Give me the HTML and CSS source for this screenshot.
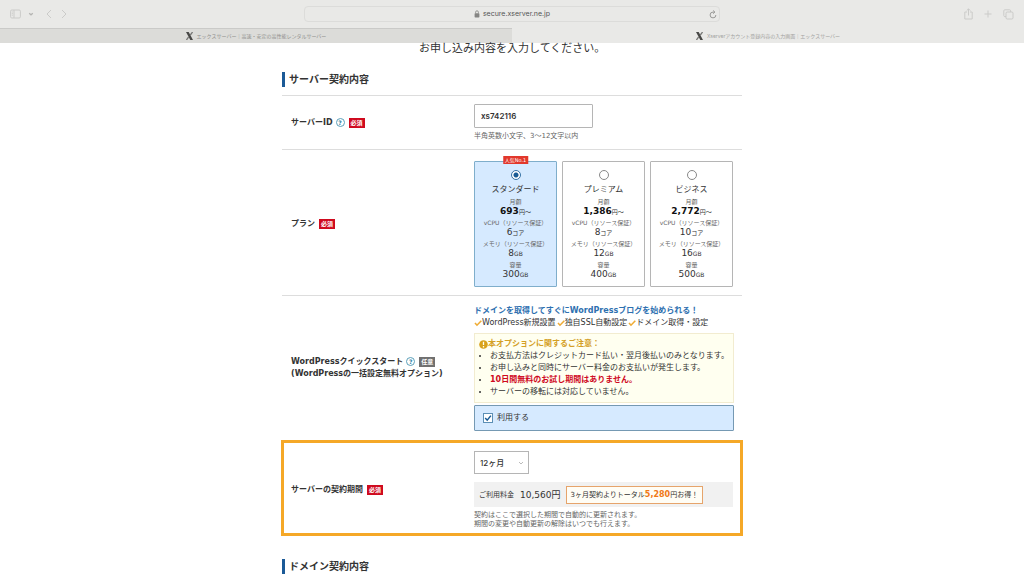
FILE: index.html
```html
<!DOCTYPE html>
<html lang="ja">
<head>
<meta charset="utf-8">
<meta name="viewport" content="width=device-width, initial-scale=1">
<title>Xserverアカウント登録内容の入力画面｜エックスサーバー</title>
<link rel="stylesheet" href="styles.css">
</head>
<body>
<header class="browser">
  <div class="toolbar">
    <div class="tools">
      <button class="tool" type="button" aria-label="サイドバー"><svg width="11" height="10" viewBox="0 0 11 10"><rect x=".6" y="1" width="9.8" height="8" rx="1.2"/><path d="M4 1v8M1.8 3h1M1.8 4.6h1M1.8 6.2h1"/></svg></button>
      <button class="tool tool-caret" type="button" aria-label="タブグループ"><svg width="6" height="10" viewBox="0 0 6 10"><path d="M1.2 4.2 3 5.8l1.8-1.6" stroke-width="1.3"/></svg></button>
      <button class="tool" type="button" aria-label="戻る"><svg width="8" height="10" viewBox="0 0 8 10"><path d="M6 1 2 5l4 4"/></svg></button>
      <button class="tool" type="button" aria-label="進む"><svg width="8" height="10" viewBox="0 0 8 10"><path d="m2 1 4 4-4 4"/></svg></button>
    </div>
    <div class="address">
      <span class="address-url"><svg width="6" height="8" viewBox="0 0 6 8"><rect x=".6" y="3.2" width="4.8" height="4.2" rx=".7" fill="#858583"/><path d="M1.6 3.4V2.2a1.4 1.4 0 0 1 2.8 0v1.2" fill="none" stroke="#858583" stroke-width=".8"/></svg>secure.xserver.ne.jp</span>
      <button class="tool reload" type="button" aria-label="再読み込み"><svg width="8" height="9" viewBox="0 0 8 9"><path d="M5.6 2.1H4A2.9 2.9 0 1 0 6.9 5M4.2.5l1.7 1.6-1.7 1.6"/></svg></button>
    </div>
    <div class="tools tools-end">
      <button class="tool" type="button" aria-label="共有"><svg width="9" height="12" viewBox="0 0 9 12"><path d="M3 4H.8v7h7.4V4H6M4.5 7.5V1M2.7 2.6 4.5.8l1.8 1.8"/></svg></button>
      <button class="tool" type="button" aria-label="新規タブ"><svg width="8" height="10" viewBox="0 0 8 10"><path d="M4 1.5v7M.5 5h7"/></svg></button>
      <button class="tool" type="button" aria-label="タブ一覧"><svg width="11" height="11" viewBox="0 0 11 11"><rect x="3" y="3" width="7" height="7" rx="1.2"/><path d="M3 7.6H1.8A1 1 0 0 1 .8 6.600V1.800A1 1 0 0 1 1.800.8h4.800a1 1 0 0 1 1 1V3"/></svg></button>
    </div>
  </div>
  <nav class="tabs">
    <a class="tab" href="#"><svg class="tab-icon" width="7" height="8" viewBox="0 0 7 8"><path d="M0 0h2.700l4.300 8H4.300z" fill="#484846"/><path d="M6.600 0 4.300 3M.4 8l2.200-3" stroke="#767674" stroke-width="1.300" fill="none"/></svg>エックスサーバー｜高速・安定の高性能レンタルサーバー</a>
    <a class="tab tab-current" href="#"><svg class="tab-icon" width="7" height="8" viewBox="0 0 7 8"><path d="M0 0h2.700l4.300 8H4.300z" fill="#484846"/><path d="M6.600 0 4.300 3M.4 8l2.200-3" stroke="#767674" stroke-width="1.300" fill="none"/></svg>Xserverアカウント登録内容の入力画面｜エックスサーバー</a>
  </nav>
</header>

<main class="page">
  <p class="lead">お申し込み内容を入力してください。</p>

  <h2 class="section-title">サーバー契約内容</h2>

  <div class="row">
    <div class="row-label"><label for="server-id">サーバーID</label><button class="help" type="button" aria-label="サーバーIDのヘルプ">?</button><span class="tag">必須</span></div>
    <div class="row-body">
      <input class="text-field" id="server-id" type="text" value="xs742116">
      <p class="note">半角英数小文字、3～12文字以内</p>
    </div>
  </div>

  <div class="row row-plan">
    <div class="row-label" id="plan-label">プラン<span class="tag">必須</span></div>
    <div class="plans" role="radiogroup" aria-labelledby="plan-label">
      <label class="plan plan-selected">
        <span class="ribbon">人気No.1</span>
        <input class="radio" type="radio" name="plan" checked>
        <span class="plan-name">スタンダード</span>
        <span class="spec">月額</span><span class="value"><b>693</b><small>円～</small></span>
        <span class="spec">vCPU（リソース保証）</span><span class="value">6<small>コア</small></span>
        <span class="spec">メモリ（リソース保証）</span><span class="value">8<small>GB</small></span>
        <span class="spec">容量</span><span class="value">300<small>GB</small></span>
      </label>
      <label class="plan">
        <input class="radio" type="radio" name="plan">
        <span class="plan-name">プレミアム</span>
        <span class="spec">月額</span><span class="value"><b>1,386</b><small>円～</small></span>
        <span class="spec">vCPU（リソース保証）</span><span class="value">8<small>コア</small></span>
        <span class="spec">メモリ（リソース保証）</span><span class="value">12<small>GB</small></span>
        <span class="spec">容量</span><span class="value">400<small>GB</small></span>
      </label>
      <label class="plan">
        <input class="radio" type="radio" name="plan">
        <span class="plan-name">ビジネス</span>
        <span class="spec">月額</span><span class="value"><b>2,772</b><small>円～</small></span>
        <span class="spec">vCPU（リソース保証）</span><span class="value">10<small>コア</small></span>
        <span class="spec">メモリ（リソース保証）</span><span class="value">16<small>GB</small></span>
        <span class="spec">容量</span><span class="value">500<small>GB</small></span>
      </label>
    </div>
  </div>

  <div class="row row-quick">
    <div class="row-label"><span>WordPressクイックスタート</span><button class="help" type="button" aria-label="クイックスタートのヘルプ">?</button><span class="tag tag-optional">任意</span><span class="label-sub">(WordPressの一括設定無料オプション)</span></div>
    <div class="row-body">
      <p class="promo">ドメインを取得してすぐにWordPressブログを始められる！</p>
      <ul class="features">
        <li><svg width="8" height="8" viewBox="0 0 8 8"><path d="m1 4 2 2.200L7.300 1.800"/></svg>WordPress新規設置</li>
        <li><svg width="8" height="8" viewBox="0 0 8 8"><path d="m1 4 2 2.200L7.300 1.800"/></svg>独自SSL自動設定</li>
        <li><svg width="8" height="8" viewBox="0 0 8 8"><path d="m1 4 2 2.200L7.300 1.800"/></svg>ドメイン取得・設定</li>
      </ul>
      <div class="notice">
        <p class="notice-title"><svg width="9" height="9" viewBox="0 0 9 9"><circle cx="4.500" cy="4.500" r="4.300" fill="#d9a21b"/><path d="M4.500 1.700v3.400M4.500 6.100v1.300" stroke="#fffff0" stroke-width="1.300"/></svg>本オプションに関するご注意：</p>
        <ul class="notice-list">
          <li>お支払方法はクレジットカード払い・翌月後払いのみとなります。</li>
          <li>お申し込みと同時にサーバー料金のお支払いが発生します。</li>
          <li><strong>10日間無料のお試し期間はありません。</strong></li>
          <li>サーバーの移転には対応していません。</li>
        </ul>
      </div>
      <label class="use"><input class="check" type="checkbox" checked>利用する</label>
    </div>
  </div>

  <div class="row row-highlight">
    <div class="row-label"><label for="term">サーバーの契約期間</label><span class="tag">必須</span></div>
    <div class="row-body">
      <select class="term" id="term"><option>12ヶ月</option></select>
      <div class="fee"><span>ご利用料金</span><span class="fee-price">10,560円</span><span class="saving">3ヶ月契約よりトータル<b>5,280</b>円お得！</span></div>
      <p class="note">契約はここで選択した期間で自動的に更新されます。<br>期間の変更や自動更新の解除はいつでも行えます。</p>
    </div>
  </div>

  <h2 class="section-title section-next">ドメイン契約内容</h2>
</main>
</body>
</html>
```

FILE: styles.css
```css
* { box-sizing: border-box; }

body {
  margin: 0;
  background: #fff;
  color: #333;
  font: 8px/12px "DejaVu Sans", "Noto Sans CJK JP", sans-serif;
}

p, ul, h2 { margin: 0; padding: 0; }
button, input, select { margin: 0; font: inherit; color: inherit; }

/* Browser window */
.browser { background: #e9e9e7; font-family: Inter, "Noto Sans CJK JP", sans-serif; }

.toolbar {
  display: grid;
  grid-template-columns: 1fr minmax(0, 416px) 1fr;
  align-items: center;
  height: 28px;
  padding: 0 10px;
}

.tools { display: flex; align-items: center; gap: 7px; }
.tools-end { justify-content: flex-end; gap: 11px; }
.tools-end svg { display: block; }

.tool {
  display: flex;
  padding: 0;
  border: 0;
  background: none;
}
.tool svg { fill: none; stroke: #cbcbc9; stroke-width: 1; }
.tool-caret { margin-right: 4px; }
.tool-caret svg { stroke: #b5b5b3; }

.address {
  display: grid;
  grid-template-columns: 1fr auto 1fr;
  align-items: center;
  height: 16px;
  padding: 0 2px;
  border: 1px solid #dcdcda;
  border-radius: 4px;
}
.address-url {
  display: flex;
  grid-column: 2;
  align-items: center;
  gap: 3px;
  color: #555;
  font-size: 7px;
}
.reload { justify-self: end; }
.reload svg { stroke: #999997; }

.tabs { display: grid; grid-template-columns: 1fr 1fr; }
.tab {
  display: flex;
  align-items: center;
  justify-content: center;
  gap: 4px;
  height: 15px;
  border-top: 1px solid #cacac8;
  background: #dcdcd9;
  color: #8e8e8c;
  font-size: 5px;
  text-decoration: none;
  white-space: nowrap;
}
.tab-current { border-color: #e9e9e7; background: #e9e9e7; color: #a2a2a0; }

/* Form */
.page { max-width: 460px; margin: 0 auto; }

.lead {
  padding-left: 137px;
  font-size: 11px;
  line-height: 11px;
}

.section-title {
  margin: 18px 0 8px;
  padding-left: 4px;
  border-left: 3px solid #1b5a97;
  font-size: 10px;
  line-height: 15px;
}
.section-next { margin: 23px 0 0; }

.row {
  display: grid;
  grid-template-columns: 183px 1fr;
  align-items: center;
  padding: 8px 9px;
  border-top: 1px solid #ddd;
}
.row-label {
  display: flex;
  flex-wrap: wrap;
  align-items: center;
  font-weight: bold;
}
.label-sub { width: 100%; }

.help {
  width: 9px;
  height: 9px;
  margin-left: 3px;
  padding: 0;
  border: 1px solid #5b9fba;
  border-radius: 50%;
  background: #fff;
  color: #2b7fa3;
  font-size: 6px;
  font-weight: bold;
  line-height: 7px;
}
.tag {
  margin-left: 4px;
  padding: 0 2px;
  background: #cf0a1e;
  color: #fff;
  font-size: 6px;
  line-height: 10px;
}
.tag-optional { background: #707070; }

.text-field {
  display: block;
  width: 119px;
  height: 24px;
  padding: 0 6px;
  border: 1px solid #b5b5b5;
  border-radius: 1px;
  background: #fff;
  font-family: Inter, sans-serif;
  font-weight: 600;
}
.note {
  padding-top: 4px;
  color: #666;
  font-size: 7px;
  line-height: 9px;
}

/* Plan cards */
.row-plan { padding: 11px 9px 8px; }
.plans { display: grid; grid-template-columns: repeat(3, 1fr); gap: 5px; }
.plan {
  position: relative;
  display: flex;
  flex-direction: column;
  align-items: center;
  padding: 8px 0 5px;
  border: 1px solid #b5b5b5;
  border-radius: 1px;
  white-space: nowrap;
}
.plan-selected { border-color: #7faecb; background: #d6eaff; }
.ribbon {
  position: absolute;
  top: -6px;
  left: 50%;
  padding: 0 2px;
  transform: translateX(-50%);
  background: #e2382c;
  color: #fff;
  font-size: 5px;
  line-height: 8px;
}
.radio {
  width: 10px;
  height: 10px;
  appearance: none;
  border: 1px solid #888;
  border-radius: 50%;
  background: #fff;
}
.radio:checked {
  border-color: #3572a5;
  background: radial-gradient(circle, #185a94 0 2px, #fff 3px);
}
.plan-name { margin: 4px 0 1px; }
.spec { color: #666; font-size: 6px; line-height: 9px; }
.value { margin-bottom: 1px; font-size: 9px; line-height: 10px; }
.value small { font-size: 6px; }
.value b { color: #111; }

/* Quick start */
.row-quick { padding-bottom: 9px; }
.promo { padding-top: 1px; color: #2e70b0; font-weight: bold; }
.features { display: flex; gap: 1px; list-style: none; white-space: nowrap; }
.features li { display: flex; align-items: center; }
.features svg { fill: none; stroke: #efac35; stroke-width: 1.6; }
.notice {
  margin: 4px 0 2px;
  padding: 4px;
  border: 1px solid #f2ecd0;
  background: #fffff0;
}
.notice-title {
  display: flex;
  align-items: center;
  color: #d4a026;
  font-weight: bold;
}
.notice-list { padding-left: 11px; white-space: nowrap; }
.notice-list strong { color: #cf0a1e; }
.use {
  display: flex;
  align-items: center;
  gap: 4px;
  height: 26px;
  padding: 0 8px;
  border: 1px solid #7599b3;
  border-radius: 1px;
  background: #d6eaff;
}
.check {
  width: 10px;
  height: 10px;
  appearance: none;
  border: 1px solid #5c8fb5;
  background: #fff url("data:image/svg+xml,%3Csvg xmlns='http://www.w3.org/2000/svg' viewBox='0 0 8 8'%3E%3Cpath d='m1.200 4 2 2.200L6.900 1.600' fill='none' stroke='%23185a94' stroke-width='1.500'/%3E%3C/svg%3E") center / 8px no-repeat;
}

/* Contract term */
.row-highlight {
  margin: 0 -1px;
  padding: 8px 7px 4px;
  border: 3px solid #f5a828;
}
.term {
  display: block;
  width: 55px;
  height: 23px;
  padding: 0 5px;
  appearance: none;
  border: 1px solid #b5b5b5;
  border-radius: 0;
  background: #fff url("data:image/svg+xml,%3Csvg xmlns='http://www.w3.org/2000/svg' viewBox='0 0 6 4'%3E%3Cpath d='m1 1 2 2 2-2' fill='none' stroke='%23bbb'/%3E%3C/svg%3E") right 4px center / 6px 4px no-repeat;
  font-family: Inter, "Noto Sans CJK JP", sans-serif;
  font-weight: 500;
}
.fee {
  display: flex;
  align-items: center;
  height: 25px;
  margin-top: 8px;
  padding: 0 5px;
  background: #f1f1f1;
  font-size: 7px;
  white-space: nowrap;
}
.fee-price { margin: 0 5px 0 6px; font-size: 9px; }
.saving {
  padding: 0 4px;
  border: 1px solid #e6a46b;
  background: #fffdf5;
  line-height: 15px;
}
.saving b { color: #f07814; font-size: 8px; }
```
